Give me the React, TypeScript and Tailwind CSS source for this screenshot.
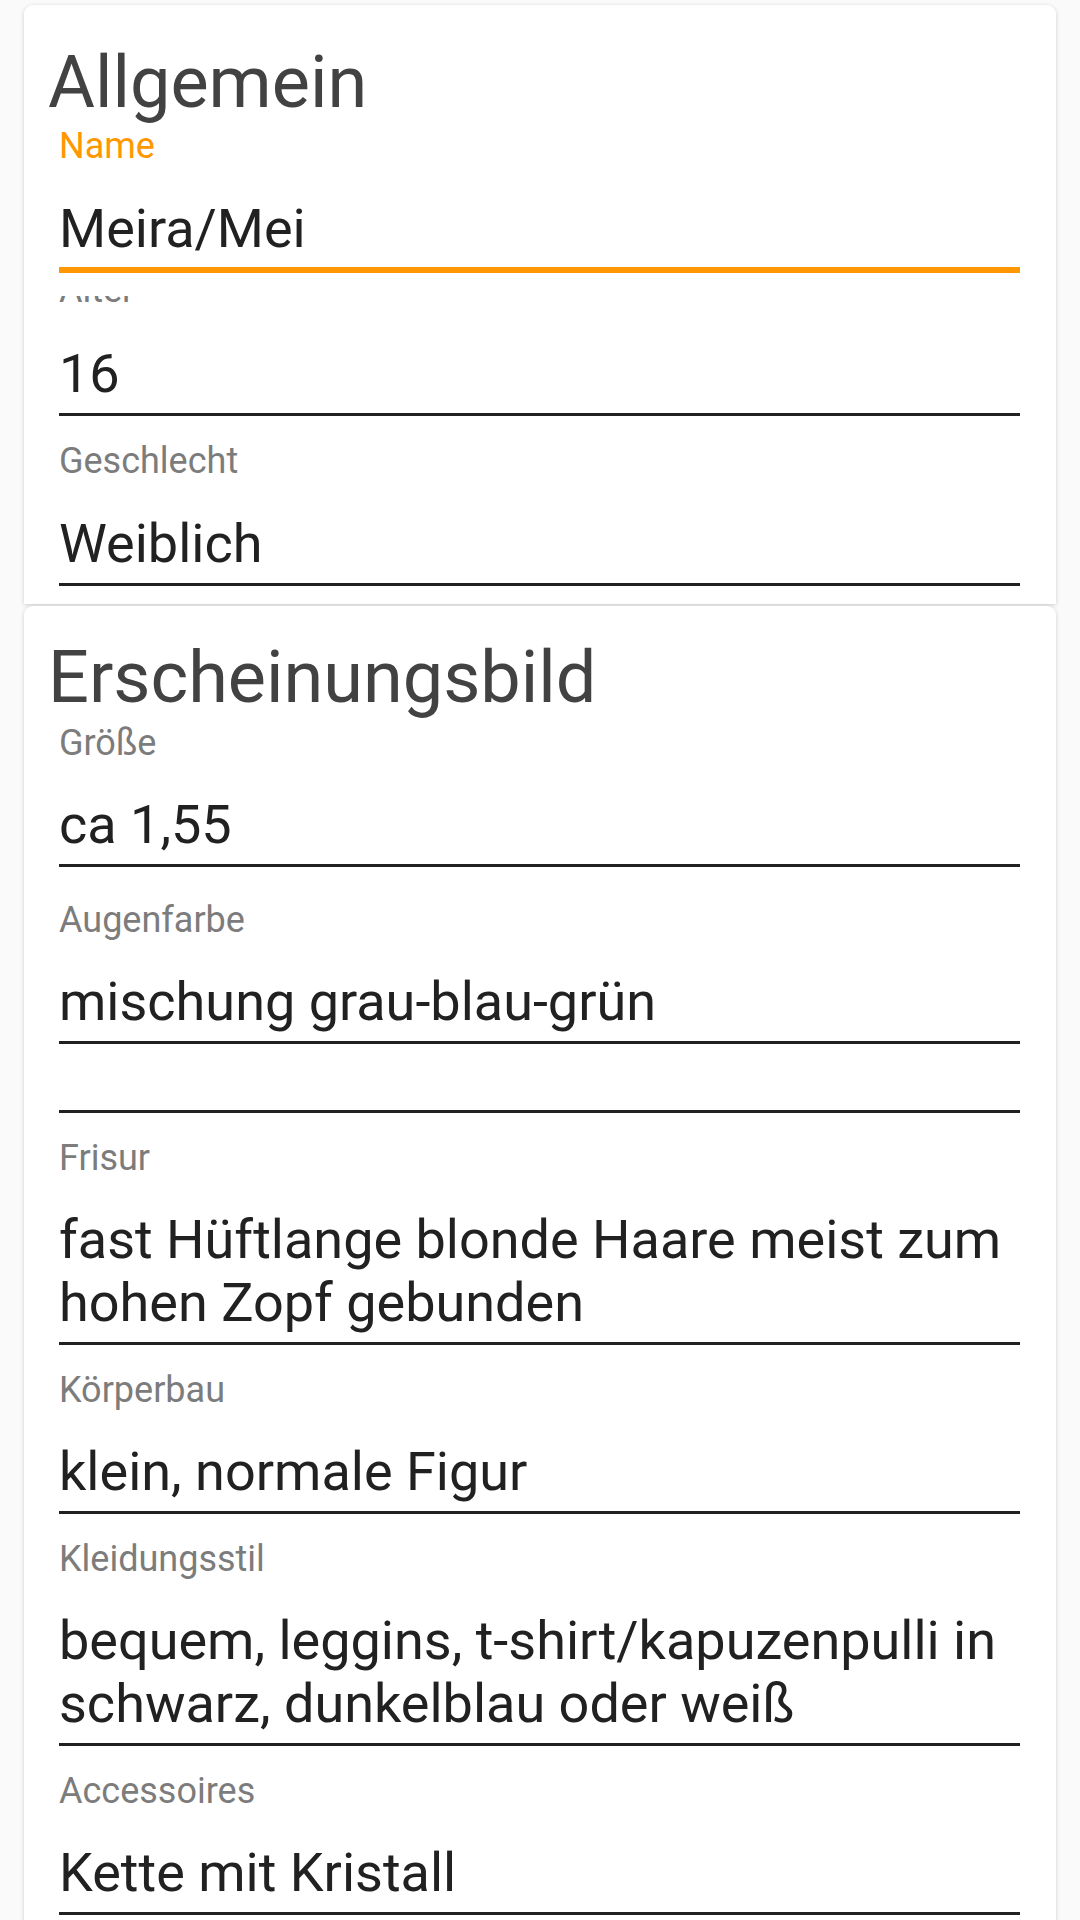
type Field = {
  label?: string;
  lines: string[];
  gapTop: number;
};

const appearance: Field[] = [
  { label: 'Größe', lines: ['ca 1,55'], gapTop: 2 },
  { label: 'Augenfarbe', lines: ['mischung grau-blau-grün'], gapTop: 32 },
  { lines: [], gapTop: 0 },
  { label: 'Frisur', lines: ['fast Hüftlange blonde Haare meist zum', 'hohen Zopf gebunden'], gapTop: 24 },
  { label: 'Körperbau', lines: ['klein, normale Figur'], gapTop: 24 },
  { label: 'Kleidungsstil', lines: ['bequem, leggins, t-shirt/kapuzenpulli in', 'schwarz, dunkelblau oder weiß'], gapTop: 24 },
  { label: 'Accessoires', lines: ['Kette mit Kristall'], gapTop: 24 },
];

function Label({ text, active }: { text: string; active?: boolean }) {
  return (
    <div className={`text-[36px] leading-[42px] whitespace-nowrap ${active ? 'text-[#ff9800]' : 'text-[#7c7c7c]'}`}>
      {text}
    </div>
  );
}

function Value({ lines }: { lines: string[] }) {
  return (
    <div className="text-[54px] leading-[63px] text-[#212121]">
      {lines.map((l) => (
        <div key={l} className="whitespace-nowrap">{l}</div>
      ))}
    </div>
  );
}

function Underline({ active }: { active?: boolean }) {
  return active ? (
    <div className="mt-[7px] h-[6px] bg-[#ff9800]" />
  ) : (
    <div className="mt-[8px] h-[3px] bg-[#212121]" />
  );
}

function TextField({ field }: { field: Field }) {
  if (!field.label) {
    // leeres Feld ohne Hinweis
    return (
      <div className="flex flex-col">
        <div className="h-[66px]" />
        <div className="h-[3px] bg-[#212121]" />
      </div>
    );
  }
  return (
    <div className="flex flex-col" style={{ marginTop: field.gapTop }}>
      <Label text={field.label} />
      <div className="mt-[29px]">
        <Value lines={field.lines} />
      </div>
      <Underline />
    </div>
  );
}

export default function App() {
  return (
    <div className="w-[1080px] h-[1920px] overflow-hidden bg-[#fafafa] font-['Roboto',sans-serif] pt-[5px]">
      {/* Allgemein */}
      <div className="mx-[24px] bg-white rounded-t-[9px] shadow-[0_1px_4px_rgba(0,0,0,0.18)] pt-[36px] pb-[18px]">
        <h1 className="ml-[24px] text-[72px] leading-[84px] text-[#424242] whitespace-nowrap">Allgemein</h1>
        <div className="ml-[35px] mr-[36px] flex flex-col">
          <Label text="Name" active />
          <div className="mt-[30px]">
            <Value lines={['Meira/Mei']} />
          </div>
          <Underline active />

          {/* Alter: Hinweis halb verdeckt */}
          <div className="h-[38px] flex flex-col justify-end">
            <div className="h-[15px] overflow-hidden flex items-end">
              <div className="text-[36px] leading-[42px] text-[#7c7c7c] whitespace-nowrap">Alter</div>
            </div>
          </div>
          <div className="mt-[31px]">
            <Value lines={['16']} />
          </div>
          <Underline />

          <div className="mt-[24px]">
            <Label text="Geschlecht" />
          </div>
          <div className="mt-[30px]">
            <Value lines={['Weiblich']} />
          </div>
          <Underline />
        </div>
      </div>

      {/* Erscheinungsbild */}
      <div className="mx-[24px] mt-[2px] bg-white rounded-t-[9px] shadow-[0_1px_4px_rgba(0,0,0,0.18)] pt-[30px] pb-[40px]">
        <h1 className="ml-[24px] text-[72px] leading-[84px] text-[#424242] whitespace-nowrap">Erscheinungsbild</h1>
        <div className="ml-[35px] mr-[36px] flex flex-col">
          {appearance.map((f, i) => (
            <TextField key={i} field={f} />
          ))}
        </div>
      </div>
    </div>
  );
}
